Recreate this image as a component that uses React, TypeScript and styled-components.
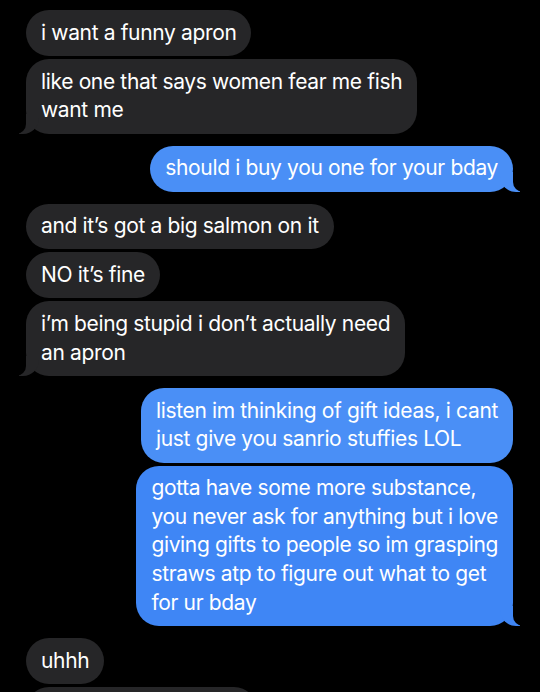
import React from 'react';
import styled, {createGlobalStyle, css} from 'styled-components';

const GlobalStyle = createGlobalStyle`
  html, body {
    margin: 0;
    padding: 0;
    background: #000;
    overflow: hidden;
  }
  body {
    font-family: Inter, "Noto Sans", "Liberation Sans", sans-serif;
  }
`

type Side = 'in' | 'out'

interface Msg {
    side: Side
    lines: string[]
    tail?: boolean
    tone?: string
}

const messages: Msg[] = [
    {side: 'in', lines: ['i want a funny apron']},
    {side: 'in', lines: ['like one that says women fear me fish', 'want me'], tail: true},
    {side: 'out', lines: ['should i buy you one for your bday'], tail: true},
    {side: 'in', lines: ['and it\u2019s got a big salmon on it']},
    {side: 'in', lines: ['NO it\u2019s fine']},
    {side: 'in', lines: ['i\u2019m being stupid i don\u2019t actually need', 'an apron'], tail: true},
    {side: 'out', lines: ['listen im thinking of gift ideas, i cant', 'just give you sanrio stuffies LOL'], tone: '#4a8ff6'},
    {
        side: 'out',
        lines: [
            'gotta have some more substance,',
            'you never ask for anything but i love',
            'giving gifts to people so im grasping',
            'straws atp to figure out what to get',
            'for ur bday',
        ],
        tail: true,
        tone: '#3f86f5',
    },
    {side: 'in', lines: ['uhhh']},
    {side: 'in', lines: ['i really don\u2019t know lol'], tail: true},
]

const Screen = styled.div`
    width: 540px;
    height: 692px;
    background: #000;
    padding: 10px 27px 0 26px;
    box-sizing: border-box;
    display: flex;
    flex-direction: column;
    overflow: hidden;
`

const Row = styled.div<{$side: Side; $gap: number}>`
    display: flex;
    justify-content: ${p => (p.$side === 'out' ? 'flex-end' : 'flex-start')};
    margin-top: ${p => p.$gap}px;
`

const inTail = css`
    &::before {
        content: "";
        position: absolute;
        bottom: 0;
        left: -7px;
        width: 20px;
        height: 20px;
        background: #262628;
        border-bottom-right-radius: 16px;
    }
    &::after {
        content: "";
        position: absolute;
        bottom: 0;
        left: -10px;
        width: 10px;
        height: 20px;
        background: #000;
        border-bottom-right-radius: 10px;
    }
`

const outTail = css<{$tone: string}>`
    &::before {
        content: "";
        position: absolute;
        bottom: 0;
        right: -7px;
        width: 20px;
        height: 20px;
        background: ${p => p.$tone};
        border-bottom-left-radius: 16px;
    }
    &::after {
        content: "";
        position: absolute;
        bottom: 0;
        right: -10px;
        width: 10px;
        height: 20px;
        background: #000;
        border-bottom-left-radius: 10px;
    }
`

const Bubble = styled.div<{$side: Side; $tail: boolean; $tone: string}>`
    position: relative;
    background: ${p => p.$tone};
    color: #fff;
    font-size: 21px;
    line-height: 28.6px;
    letter-spacing: -0.35px;
    padding: 8.7px 15px;
    border-radius: 23px;
    white-space: nowrap;
    ${p => (p.$tail ? (p.$side === 'in' ? inTail : outTail) : '')}
`

const Text = styled.span`
    position: relative;
    z-index: 1;
`

const App: React.FC = () => {
    return (
        <>
            <GlobalStyle/>
            <Screen>
                {messages.map((m, i) => {
                    const prev = messages[i - 1]
                    const gap = !prev ? 0 : prev.side === m.side ? 3 : 12
                    const tone = m.tone ?? (m.side === 'in' ? '#262628' : '#4a8ff6')
                    return (
                        <Row key={i} $side={m.side} $gap={gap}>
                            <Bubble $side={m.side} $tail={!!m.tail} $tone={tone}>
                                <Text>
                                    {m.lines.map((l, j) => (
                                        <React.Fragment key={j}>
                                            {j > 0 && <br/>}
                                            {l}
                                        </React.Fragment>
                                    ))}
                                </Text>
                            </Bubble>
                        </Row>
                    )
                })}
            </Screen>
        </>
    )
}

export default App;
